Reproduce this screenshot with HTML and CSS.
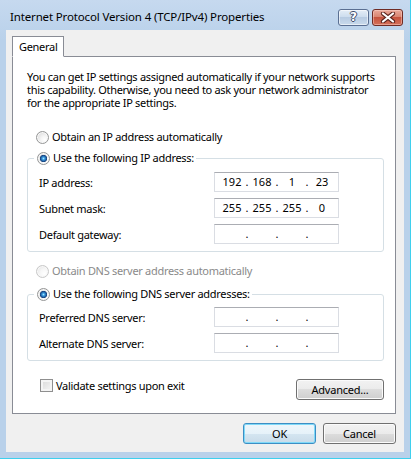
FILE: index.html
```html
<!DOCTYPE html>
<html>
<head>
<meta charset="utf-8">
<link rel="stylesheet" href="styles.css">
</head>
<body>
<div class="window">
  <div class="titlebar">
    <span class="title">Internet Protocol Version 4 (TCP/IPv4) Properties</span>
    <div class="caption-btns">
      <span class="cbtn help">?</span>
      <span class="cbtn close">
        <svg width="16" height="11" viewBox="0 0 16 11">
          <path d="M3 1.5 L13 9.5 M13 1.5 L3 9.5" stroke="#5a231c" stroke-width="4.2" stroke-linecap="round" fill="none"/>
          <path d="M3 1.5 L13 9.5 M13 1.5 L3 9.5" stroke="#ffffff" stroke-width="2.2" stroke-linecap="round" fill="none"/>
        </svg>
      </span>
    </div>
  </div>
  <div class="client">
    <div class="tabs"><div class="tab">General</div></div>
    <div class="panel">
      <div class="intro">
        <div class="line">You can get IP settings assigned automatically if your network supports</div>
        <div class="line">this capability. Otherwise, you need to ask your network administrator</div>
        <div class="line">for the appropriate IP settings.</div>
      </div>
      <div class="option first"><span class="radio"></span><span>Obtain an IP address automatically</span></div>
      <fieldset class="group">
        <legend class="option"><span class="radio checked"></span><span>Use the following IP address:</span></legend>
        <div class="field"><span class="label">IP address:</span><div class="ipbox"><span>192</span><i>.</i><span>168</span><i>.</i><span>1</span><i>.</i><span>23</span></div></div>
        <div class="field"><span class="label">Subnet mask:</span><div class="ipbox"><span>255</span><i>.</i><span>255</span><i>.</i><span>255</span><i>.</i><span>0</span></div></div>
        <div class="field"><span class="label">Default gateway:</span><div class="ipbox"><span></span><i>.</i><span></span><i>.</i><span></span><i>.</i><span></span></div></div>
      </fieldset>
      <div class="option disabled dns"><span class="radio"></span><span>Obtain DNS server address automatically</span></div>
      <fieldset class="group group2">
        <legend class="option"><span class="radio checked"></span><span>Use the following DNS server addresses:</span></legend>
        <div class="field"><span class="label">Preferred DNS server:</span><div class="ipbox"><span></span><i>.</i><span></span><i>.</i><span></span><i>.</i><span></span></div></div>
        <div class="field"><span class="label">Alternate DNS server:</span><div class="ipbox"><span></span><i>.</i><span></span><i>.</i><span></span><i>.</i><span></span></div></div>
      </fieldset>
      <div class="bottom-row">
        <label class="check"><span class="checkbox"></span><span>Validate settings upon exit</span></label>
        <button class="btn advanced">Advanced...</button>
      </div>
    </div>
    <div class="footer">
      <button class="btn default">OK</button>
      <button class="btn">Cancel</button>
    </div>
  </div>
</div>
</body>
</html>
```
FILE: styles.css
```css
html, body {
  margin: 0;
  padding: 0;
  background: #ffffff;
}
body {
  font-family: "Noto Sans", "Open Sans", sans-serif;
  font-size: 11px;
  letter-spacing: -0.3px;
  color: #000;
}
.window {
  width: 410px;
  height: 458px;
  border-right: 1px solid #3ed0ee;
  border-bottom: 1px solid #3ed0ee;
  background: linear-gradient(#c6d9ef, #b9d1ea 40px);
  display: flex;
  flex-direction: column;
}
.titlebar {
  height: 30px;
  display: flex;
  align-items: flex-start;
  padding-left: 10px;
  flex: none;
}
.title {
  padding-top: 9px;
  line-height: 16px;
  font-size: 11.5px;
  letter-spacing: -0.15px;
  color: #000;
  white-space: nowrap;
}
.caption-btns {
  margin-left: auto;
  margin-top: 9px;
  margin-right: 7px;
  display: flex;
  gap: 3px;
}
.cbtn {
  box-sizing: border-box;
  width: 31px;
  height: 17px;
  border-radius: 3px;
  display: flex;
  align-items: center;
  justify-content: center;
}
.help {
  border: 1px solid #5a6f92;
  background: linear-gradient(#e4edf7, #cdddee 45%, #b7cbe2 50%, #c9daec);
  box-shadow: inset 0 0 0 1px rgba(255,255,255,0.55);
  color: #ffffff;
  font-family: "DejaVu Sans", sans-serif;
  font-weight: bold;
  font-size: 12px;
  letter-spacing: 0;
  line-height: 15px;
  text-shadow: 1px 0 0 #3e4e6a, -1px 0 0 #3e4e6a, 0 1px 0 #3e4e6a, 0 -1px 0 #3e4e6a;
}
.close {
  border: 1px solid #6f2b24;
  background: linear-gradient(#eaa99a, #d98572 45%, #c5533e 50%, #d4705a);
  box-shadow: inset 0 0 0 1px rgba(255,220,210,0.45);
}
.close svg { display: block; }
.client {
  flex: 1;
  margin: 0 6px 6px 6px;
  background: #f0f0f0;
  padding: 6px 8px 0 6px;
}
.tabs {
  display: flex;
}
.tab {
  position: relative;
  z-index: 1;
  box-sizing: border-box;
  width: 52px;
  height: 21px;
  margin-bottom: -1px;
  border: 1px solid #898c95;
  border-bottom: 1px solid #ffffff;
  background: #ffffff;
  padding-left: 6px;
  line-height: 19px;
}
.panel {
  box-sizing: border-box;
  width: 384px;
  border: 1px solid #898c95;
  background: #ffffff;
  padding: 13px 11px 13px 14px;
}
.intro {
  margin: 0;
}
.intro .line {
  height: 13px;
  line-height: 13px;
  white-space: nowrap;
}
.option {
  display: flex;
  align-items: center;
  height: 16px;
  line-height: 16px;
  white-space: nowrap;
}
.option .radio {
  margin-right: 3px;
}
.option.first {
  margin-top: 20px;
  margin-left: 9px;
}
.option.dns {
  margin-top: 11px;
  margin-left: 9px;
}
.disabled {
  color: #8a8a8a;
}
.radio {
  box-sizing: border-box;
  width: 13px;
  height: 13px;
  border-radius: 50%;
  border: 1px solid #959696;
  background: radial-gradient(circle at 70% 70%, #ffffff 0, #f4f4f4 35%, #dadada 85%);
  box-shadow: inset 0 0 0 1px #f8f8f8;
  flex: none;
}
.radio.checked {
  background:
    radial-gradient(circle at 50% 50%, #a9e6ff 0, #3c9ee0 1.3px, #1f5fa4 2.6px, #163f78 3.4px, rgba(22,63,120,0) 3.9px),
    radial-gradient(circle at 70% 70%, #ffffff 0, #f4f4f4 35%, #dadada 85%);
}
.disabled .radio {
  border-color: #c8c8c8;
  background: radial-gradient(circle at 70% 70%, #ffffff 0, #f7f7f7 40%, #e6e6e6 85%);
}
.group {
  margin: 5px 0 0 0;
  padding: 0 11px 7px 11px;
  border: 1px solid #d5dfe5;
  border-radius: 3px;
  min-width: 0;
}
.group2 {
  margin-top: 7px;
}
.group legend {
  margin-left: -5px;
  padding: 0 2px 0 3px;
}
.field {
  display: flex;
  align-items: center;
  height: 20px;
  margin-top: 6px;
}
.group2 .field:first-of-type {
  margin-top: 5px;
}
.label {
  width: 175px;
  white-space: nowrap;
}
.ipbox {
  box-sizing: border-box;
  width: 125px;
  height: 20px;
  border: 1px solid #dadde3;
  border-top-color: #abadb3;
  background: #ffffff;
  display: flex;
  padding-left: 4px;
  line-height: 18px;
  letter-spacing: 0;
}
.ipbox span {
  width: 26px;
  text-align: center;
}
.ipbox i {
  font-style: normal;
  width: 4px;
  text-align: center;
}
.bottom-row {
  margin-top: 18px;
  display: flex;
  align-items: flex-start;
  justify-content: space-between;
}
.check {
  display: flex;
  align-items: center;
  height: 13px;
  margin-left: 13px;
  white-space: nowrap;
}
.checkbox {
  box-sizing: border-box;
  width: 13px;
  height: 13px;
  border: 1px solid #8f8f8f;
  background: linear-gradient(135deg, #d8d8d8, #f6f6f6);
  box-shadow: inset 0 0 0 2px #f4f4f4;
  margin-right: 3px;
  flex: none;
}
.btn {
  box-sizing: border-box;
  height: 21px;
  border: 1px solid #707070;
  border-radius: 3px;
  background: linear-gradient(#f2f2f2 0, #ebebeb 50%, #dddddd 50%, #cfcfcf 100%);
  box-shadow: inset 0 0 0 1px #fbfbfb;
  font-family: "Noto Sans", "Open Sans", sans-serif;
  font-size: 11px;
  letter-spacing: -0.2px;
  color: #000;
  padding: 0;
  line-height: 18px;
}
.advanced {
  width: 88px;
}
.footer {
  margin-top: 9px;
  display: flex;
  justify-content: flex-end;
  gap: 7px;
}
.footer .btn {
  width: 73px;
}
.btn.default {
  border-color: #3c8ec4;
  box-shadow: inset 0 0 0 1px #7fd9f8;
  background: linear-gradient(#eef6fb 0, #e6f2f9 50%, #d5e6f1 50%, #c8dbe9 100%);
}
```
